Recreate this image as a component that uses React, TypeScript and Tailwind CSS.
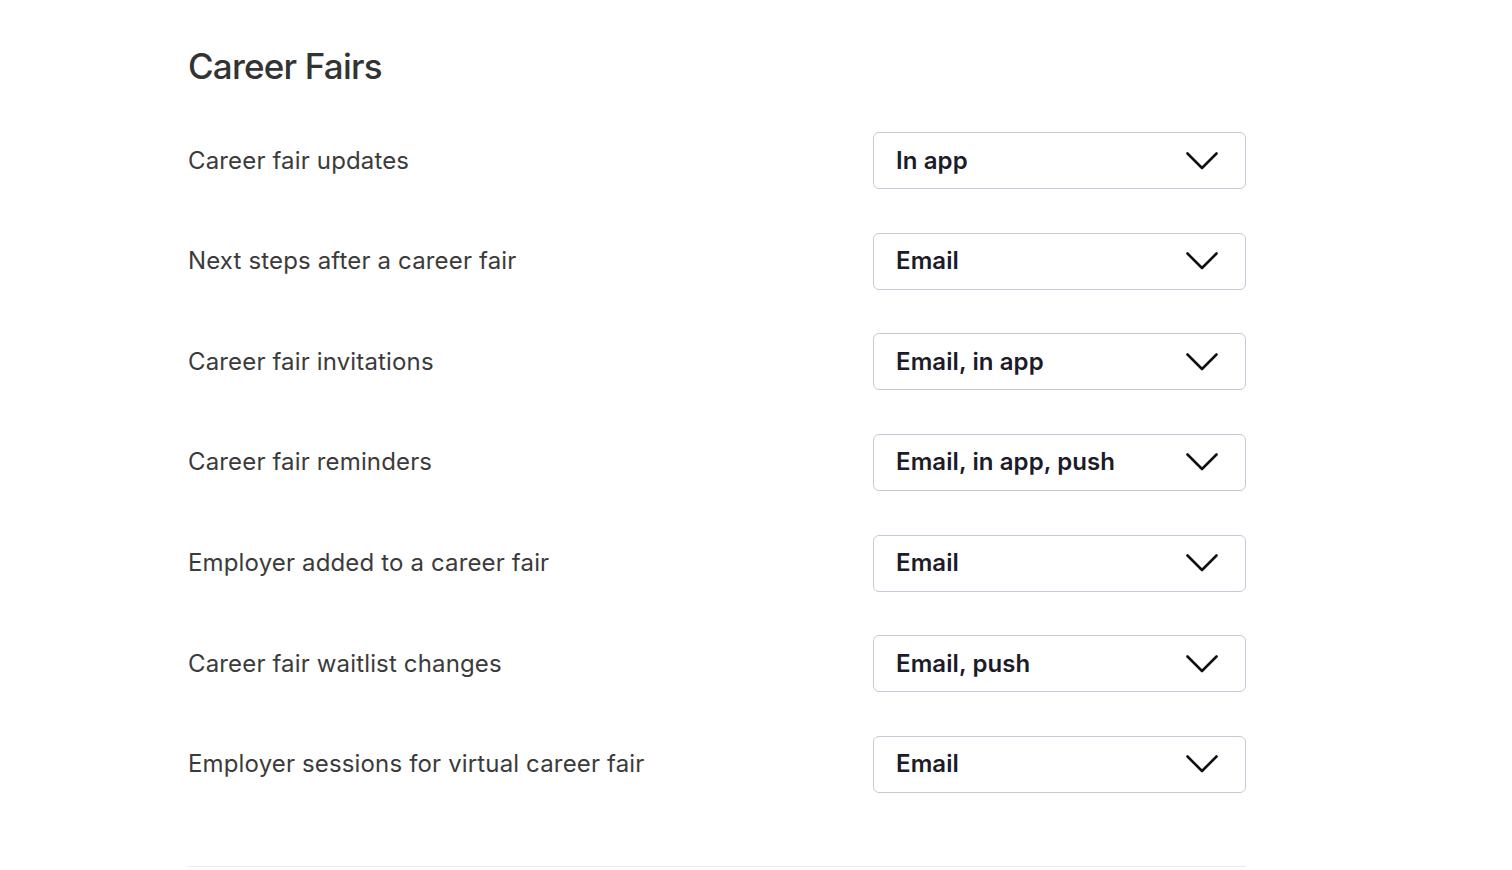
import React from 'react';

const rows = [
  { label: 'Career fair updates', value: 'In app' },
  { label: 'Next steps after a career fair', value: 'Email' },
  { label: 'Career fair invitations', value: 'Email, in app' },
  { label: 'Career fair reminders', value: 'Email, in app, push' },
  { label: 'Employer added to a career fair', value: 'Email' },
  { label: 'Career fair waitlist changes', value: 'Email, push' },
  { label: 'Employer sessions for virtual career fair', value: 'Email' },
];

const Chevron: React.FC = () => (
  <svg width="32" height="18" viewBox="0 0 32 18" fill="none" className="shrink-0">
    <path d="M1.5 1.5 L16 16 L30.5 1.5" stroke="#111" strokeWidth="2.6" strokeLinecap="round" strokeLinejoin="round" />
  </svg>
);

const App: React.FC = () => {
  return (
    <div className="min-h-screen bg-white" style={{ fontFamily: 'Inter, "Noto Sans", sans-serif' }}>
      <div className="w-[1058px] ml-[188px] pt-[44px]">
        {/* Header */}
        <h2 className="text-[35px] leading-[44px] font-medium text-[#333333] tracking-[-0.8px]">Career Fairs</h2>

        {/* Rows */}
        <div className="mt-[44px] flex flex-col gap-[43.67px]">
          {rows.map((row, idx) => (
            <div key={idx} className="flex items-center justify-between">
              <span className="text-[24px] text-[#3b3b3b] tracking-[0.15px]">{row.label}</span>
              <button className="w-[373px] h-[57px] border border-[#c9c7d9] rounded-[6px] flex items-center justify-between pl-[22px] pr-[27px] bg-white">
                <span className="text-[24px] font-semibold text-[#1c1b29] tracking-[0.1px]">{row.value}</span>
                <Chevron />
              </button>
            </div>
          ))}
        </div>

        <div className="mt-[73px] border-t border-[#ececf0]" />
      </div>
    </div>
  );
};

export default App;
